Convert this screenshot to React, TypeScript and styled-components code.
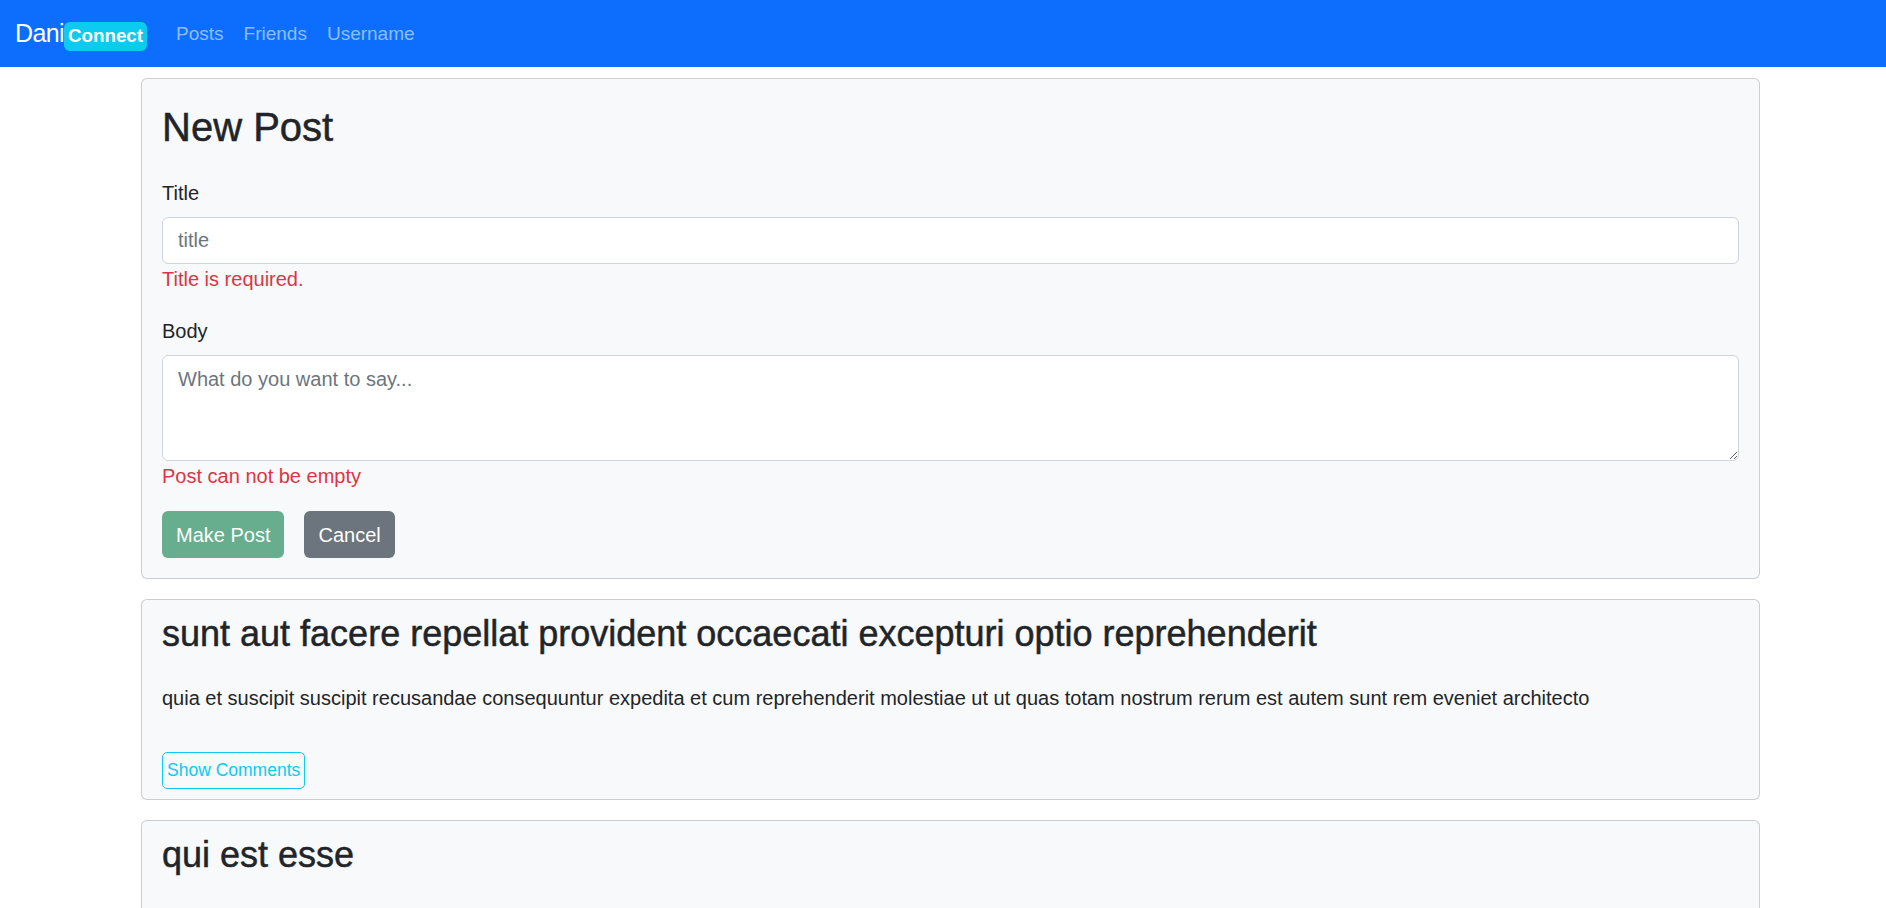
import React from 'react';
import styled, { createGlobalStyle } from 'styled-components';

const GlobalStyle = createGlobalStyle`
  *, *::before, *::after {
    box-sizing: border-box;
  }
  body {
    margin: 0;
    font-family: "Liberation Sans", Arial, sans-serif;
    color: #212529;
    background: #fff;
  }
`;

const Page = styled.div`
  height: 100vh;
  overflow: hidden;
  display: flex;
  flex-direction: column;
`;

const Navbar = styled.nav`
  flex-shrink: 0;
  height: 67px;
  padding: 0 15px;
  display: flex;
  align-items: center;
  background: #0d6efd;
`;

const Brand = styled.a`
  margin-right: 19px;
  font-size: 25px;
  line-height: 1.5;
  letter-spacing: -0.6px;
  color: #fff;
  text-decoration: none;
  white-space: nowrap;
`;

const Badge = styled.span`
  display: inline-block;
  padding: 5px 4px;
  font-size: 18.75px;
  font-weight: 700;
  line-height: 1;
  letter-spacing: 0;
  color: #fff;
  background: #0dcaf0;
  border-radius: 6px;
`;

const NavList = styled.div`
  display: flex;
`;

const NavLink = styled.a`
  padding: 2px 10px 0;
  font-size: 19px;
  line-height: 1.5;
  color: rgba(255, 255, 255, 0.55);
  text-decoration: none;
`;

const Main = styled.main`
  flex: 1;
  min-height: 0;
  padding: 11px 126px 0 141px;
  display: flex;
  flex-direction: column;
  gap: 20px;
`;

const Card = styled.div<{ $compact?: boolean }>`
  flex-shrink: 0;
  padding: ${(p) => (p.$compact ? '10px 20px' : '20px')};
  background: #f8f9fa;
  border: 1px solid rgba(0, 0, 0, 0.175);
  border-radius: 6px;
`;

// headings are semibold in the design; thicken the regular face a little
const FormTitle = styled.h2`
  margin: 0 0 27px;
  padding-top: 4px;
  font-size: 40px;
  font-weight: 400;
  line-height: 48px;
  -webkit-text-stroke: 0.5px currentColor;
`;

const Field = styled.div`
  & + & {
    margin-top: 22px;
  }
`;

const Label = styled.label`
  display: block;
  margin-bottom: 9px;
  font-size: 20px;
  line-height: 30px;
`;

const TextInput = styled.input`
  display: block;
  width: 100%;
  height: 47px;
  padding: 7.5px 15px;
  font: inherit;
  font-size: 20px;
  line-height: 30px;
  color: #212529;
  background: #fff;
  border: 1px solid #ced4da;
  border-radius: 6px;
  outline: none;

  &::placeholder {
    color: #6c757d;
    opacity: 1;
  }
`;

const TextArea = styled.textarea`
  display: block;
  width: 100%;
  height: 106px;
  padding: 7.5px 15px;
  font: inherit;
  font-size: 20px;
  line-height: 30px;
  color: #212529;
  background: #fff;
  border: 1px solid #ced4da;
  border-radius: 6px;
  outline: none;
  resize: vertical;

  &::placeholder {
    color: #6c757d;
    opacity: 1;
  }
`;

const Feedback = styled.div`
  font-size: 20px;
  line-height: 30px;
  color: #dc3545;
`;

const Actions = styled.div`
  margin-top: 20px;
  display: flex;
  gap: 20px;
`;

const Button = styled.button<{ $variant: 'success' | 'secondary' }>`
  height: 47px;
  padding: 0 13px;
  font: inherit;
  font-size: 20px;
  line-height: 30px;
  color: #fff;
  background: ${(p) => (p.$variant === 'success' ? '#198754' : '#6c757d')};
  border: 1px solid transparent;
  border-radius: 6px;
  cursor: pointer;

  &:disabled {
    opacity: 0.65;
    cursor: default;
  }
`;

const PostTitle = styled.h3`
  margin: 3px 0 28px;
  font-size: 36px;
  font-weight: 400;
  line-height: 42px;
  -webkit-text-stroke: 0.5px currentColor;
`;

const PostBody = styled.p`
  margin: 0 0 39px;
  font-size: 20px;
  line-height: 30px;
`;

const OutlineButton = styled.button`
  height: 37px;
  padding: 0 4px;
  font: inherit;
  font-size: 17.5px;
  color: #0dcaf0;
  background: transparent;
  border: 1px solid #0dcaf0;
  border-radius: 5px;
  cursor: pointer;
`;

interface Post {
  id: number;
  title: string;
  body: string;
}

const posts: Post[] = [
  {
    id: 1,
    title: 'sunt aut facere repellat provident occaecati excepturi optio reprehenderit',
    body:
      'quia et suscipit suscipit recusandae consequuntur expedita et cum reprehenderit molestiae ut ut quas totam nostrum rerum est autem sunt rem eveniet architecto',
  },
  {
    id: 2,
    title: 'qui est esse',
    body:
      'est rerum tempore vitae sequi sint nihil reprehenderit dolor beatae ea dolores neque fugiat blanditiis voluptate porro vel nihil molestiae ut reiciendis qui aperiam non debitis possimus qui neque nisi nulla',
  },
];

const PostCard: React.FC<{ post: Post }> = ({ post }) => (
  <Card $compact>
    <PostTitle>{post.title}</PostTitle>
    <PostBody>{post.body}</PostBody>
    <OutlineButton>Show Comments</OutlineButton>
  </Card>
);

const App: React.FC = () => {
  return (
    <Page>
      <GlobalStyle />
      <Navbar>
        <Brand href="#">
          Dani<Badge>Connect</Badge>
        </Brand>
        <NavList>
          <NavLink href="#">Posts</NavLink>
          <NavLink href="#">Friends</NavLink>
          <NavLink href="#">Username</NavLink>
        </NavList>
      </Navbar>
      <Main>
        <Card>
          <FormTitle>New Post</FormTitle>
          <Field>
            <Label htmlFor="title">Title</Label>
            <TextInput id="title" placeholder="title" />
            <Feedback>Title is required.</Feedback>
          </Field>
          <Field>
            <Label htmlFor="body">Body</Label>
            <TextArea id="body" placeholder="What do you want to say..." />
            <Feedback>Post can not be empty</Feedback>
          </Field>
          <Actions>
            <Button $variant="success" disabled>
              Make Post
            </Button>
            <Button $variant="secondary">Cancel</Button>
          </Actions>
        </Card>
        {posts.map((post) => (
          <PostCard key={post.id} post={post} />
        ))}
      </Main>
    </Page>
  );
};

export default App;
